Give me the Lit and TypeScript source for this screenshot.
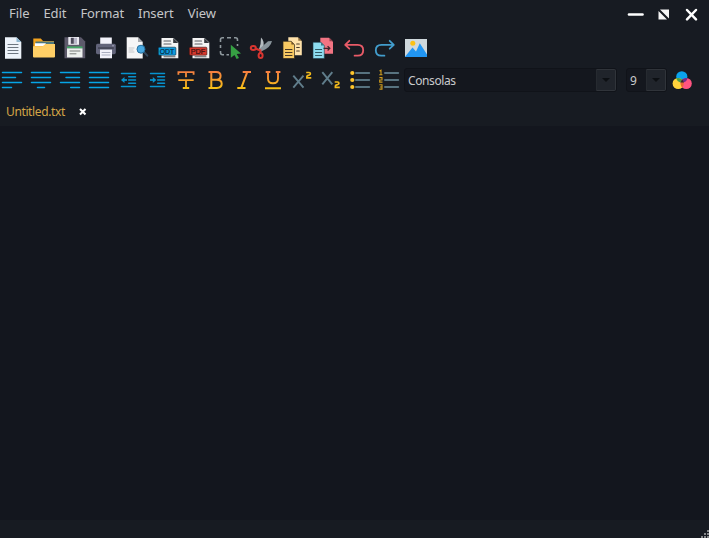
import { LitElement, html, svg, css } from "lit";
import { customElement } from "lit/decorators.js";

const lines = (rows: number[][], color: string, w = 1.5) =>
  rows.map(([x1, x2, y]) => svg`<path d="M${x1} ${y}H${x2}" stroke=${color} stroke-width=${w} stroke-linecap="round" fill="none"/>`);

const BLUE = "#06a5e6";

const badge = (label: string, color: string, dark: string) => svg`
  <path d="M5.5 2H17.5L22.3 6.5V22.3H5.5Z" fill="#f4f4f4"/>
  <path d="M17.2 2V7H22.3Z" fill="#33363c"/>
  ${lines([[8, 14.5, 5], [8, 15, 8], [8, 19, 20.8]], "#5a5d62", 1.1)}
  <rect x="2.3" y="11.2" width="17.6" height="8" rx="1" fill=${color} stroke=${dark} stroke-width=".6"/>
  <text x="11" y="17.9" text-anchor="middle" textLength="14.5" lengthAdjust="spacingAndGlyphs" font-family="Liberation Sans, sans-serif" font-size="7.6" fill=${dark} stroke=${dark} stroke-width=".2">${label}</text>`;

const fileIcons = [
  svg`<path d="M4 1.2H15.5L20.3 6V22.7H4Z" fill="#edf3fa"/><path d="M15.5 1.2V6H20.3Z" fill="#8db5cf"/>
    ${lines([[7, 17, 8.5], [7, 17, 11.5], [7, 17, 14.5], [7, 17, 17.5]], "#6d7680", 1.1)}`,
  svg`<path d="M1.3 2.5H8.8L11 5H22V12H1.3Z" fill="#f4a31e"/><path d="M3.5 5.5H22V8H3.5Z" fill="#4c777c"/>
    <path d="M3 7.2H14L12 10H3Z" fill="#fff"/><path d="M1 10.2H10.5L13.5 8H23V20.5Q23 21.6 22 21.6H2Q1 21.6 1 20.5Z" fill="#ffcf66"/>`,
  svg`<path d="M1.5 1.2H18L22.2 5.5V22.3H1.5Z" fill="#5d5a6b"/><path d="M5.3 1H16V8.8H5.3Z" fill="#ecebf2"/>
    <rect x="7.8" y="1.8" width="3" height="6" fill="#4b4959"/><rect x="11" y="1.8" width="3" height="6" fill="#b9b7c8"/>
    <rect x="4" y="10.4" width="15.5" height="2" fill="#43a866"/><rect x="4" y="12.4" width="15.5" height="9" fill="#edf0ee"/>
    ${lines([[7, 17, 15], [7, 13, 17.8]], "#777b78", 1)}`,
  svg`<rect x="6.2" y="1.5" width="11.6" height="8" fill="#f2f2fa"/><rect x="2" y="7.7" width="19.8" height="10.5" rx="1.6" fill="#62647a"/>
    <rect x="4" y="11.3" width="15.8" height="1.5" fill="#404253"/><circle cx="19" cy="9.8" r=".7" fill="#b8bbd0"/>
    <rect x="6" y="13.6" width="12" height="8.7" fill="#f2f2fa"/>${lines([[8, 16, 16.5], [8, 16, 19]], "#aaaec0", 1)}`,
  svg`<path d="M1.7 1.2H13L17.7 6V22.5H1.7Z" fill="#f6f6f6"/><path d="M13 1.2V6H17.7Z" fill="#a8aaae"/>
    ${lines([[4, 9, 12], [4, 8, 14], [4, 9, 16]], "#c6c8ca", 1)}
    <path d="M18.5 15.5L22.3 19.7" stroke="#33475b" stroke-width="2" stroke-linecap="round"/><circle cx="16" cy="13.2" r="4" fill="#48a7df" stroke="#256d9b" stroke-width="1"/>`,
  badge("ODT", "#109bdc", "#08283d"),
  badge("PDF", "#d5392e", "#33100f"),
  svg`<path d="M2.5 6V3.5Q2.5 1.8 4.5 1.8H6M9 1.8H13M16 1.8H17.5Q19.5 1.8 19.5 3.8V5M19.5 8V10M2.5 9V12M2.5 15V16.5Q2.5 18.7 4.5 18.7H6M8.5 18.7H11" stroke="#8e989d" stroke-width="1.6" fill="none"/>
    <path d="M12.8 8.7L23 17.4L18.7 18L21 22L18.6 23L16.5 19L12.8 21.8Z" fill="#36a043"/>`,
  svg`<path d="M12 1.5Q15.5 4 14.4 12.5L11.8 16L9.8 14Q12.2 8 12 1.5Z" fill="#b5bcc0"/><path d="M23 5L19 5.2L10.6 12.8L12.2 15.4Q21.5 12 23 5Z" fill="#89949b"/>
    <g fill="none" stroke="#d93530" stroke-width="2"><ellipse cx="4.3" cy="12" rx="2.5" ry="2"/><ellipse cx="11.6" cy="19.5" rx="2" ry="2.5"/><path d="M6.5 12.5L11.4 14.5V17"/></g>`,
  svg`<path d="M8.3 1.3H17.8L21.8 5.3V19.3H8.3Z" fill="#ffe2aa"/><path d="M18.3 1.3V4.8H21.8Z" fill="#8c6c3b"/>
    ${lines([[16.7, 19.3, 8], [16.7, 19.3, 11.5], [16.7, 19.3, 15]], "#4a3925", 1.1)}
    <path d="M3 5.3H11.2L14.5 8.6V22.5H3Z" fill="#f8c962" stroke="#2b241b" stroke-width=".7"/><path d="M11.4 5.3V8.4H14.5Z" fill="#715226"/>
    ${lines([[5.4, 12, 13.5], [5.4, 12, 16.5], [5.4, 12, 19.5]], "#4a3925", 1)}`,
  svg`<path d="M9.3 1.7H18L22 5.7V17.7H9.3Z" fill="#f27483"/><path d="M18.5 1.7V5.2H22Z" fill="#93404c"/>
    <path d="M2 6.3H10L13.3 9.6V22.5H2Z" fill="#8ddcf0" stroke="#1e3d49" stroke-width=".6"/><path d="M10 6.3V9.6H13.3Z" fill="#3c7482"/>
    ${lines([[4.5, 10.7, 13.5], [4.5, 10.7, 16.5], [4.5, 10.7, 19.5]], "#2f5964", 1)}
    <path d="M12.5 12.3H18.6M16.6 10.1L18.8 12.3L16.6 14.5" fill="none" stroke="#42262d" stroke-width="1.3"/>`,
  svg`<path d="M7.3 4.8L3.2 8.8L7.3 12.7M3.5 8.8H15.7Q21.2 8.8 21.2 14.2Q21.2 19.7 15.7 19.7H12.6" fill="none" stroke="#e95b68" stroke-width="1.8" stroke-linecap="round" stroke-linejoin="round"/>`,
  svg`<path d="M16.7 4.8L20.8 8.8L16.7 12.7M20.5 8.8H8.3Q2.8 8.8 2.8 14.2Q2.8 19.7 8.3 19.7H11.4" fill="none" stroke="#429dcc" stroke-width="1.8" stroke-linecap="round" stroke-linejoin="round"/>`,
  svg`<rect x="1" y="3" width="22" height="18" fill="#cfd8dc"/><circle cx="8.8" cy="7.2" r="2.5" fill="#fbc116"/>
    <path d="M1 20.7L8.5 11.5L12 15.5L15.8 7.3L23 18.5V21H1Z" fill="#2196f3"/>`,
];

const two = (x: number, y: number) =>
  svg`<path transform="translate(${x} ${y})" d="M.2 1H3.2Q4.4 1 4.4 2.2Q4.4 3.2 3.4 3.5L1.6 4.1Q.9 4.4 .9 5.2V6.4H5.3" fill="none" stroke="#f1b91c" stroke-width="1.7"/>`;

const formatIcons = [
  svg`${lines([[2.5, 21.5, 4.5], [2.5, 15.5, 9.5], [2.5, 21.5, 14.5], [2.5, 11.5, 19.5]], BLUE)}`,
  svg`${lines([[2.5, 21.5, 4.5], [2.5, 21.5, 9.5], [2.5, 21.5, 14.5], [8.5, 15.5, 19.5]], BLUE)}`,
  svg`${lines([[2.5, 21.5, 4.5], [8, 21.5, 9.5], [2.5, 21.5, 14.5], [12.7, 21.5, 19.5]], BLUE)}`,
  svg`${lines([[2.5, 21.5, 4.5], [2.5, 21.5, 9.5], [2.5, 21.5, 14.5], [2.5, 21.5, 19.5]], BLUE)}`,
  svg`${lines([[5.5, 19.5, 5.5], [12.7, 19.5, 8.7], [12.7, 19.5, 12.1], [12.7, 19.5, 15.3], [5.5, 19.5, 18.5]], "#0793cf", 1.5)}<path d="M11 12H6.5" stroke="#0793cf" stroke-width="1.7"/><path d="M8.5 9V15L5 12Z" fill="#0793cf"/>`,
  svg`${lines([[5.5, 19.5, 5.5], [12.7, 19.5, 8.7], [12.7, 19.5, 12.1], [12.7, 19.5, 15.3], [5.5, 19.5, 18.5]], "#0793cf", 1.5)}<path d="M5 12H9" stroke="#0793cf" stroke-width="1.7"/><path d="M7.8 9V15L11.3 12Z" fill="#0793cf"/>`,
  svg`<path d="M4.4 6.8V4.2H19.6V6.8M12 4.2V9.3M12 12V20M8.8 20H15.2M4.3 12.1H19.7" fill="none" stroke="url(#warm)" stroke-width="1.8"/>`,
  svg`<path d="M5.5 4.1H13.2Q17.6 4.1 17.6 7.8Q17.6 11.7 13.5 11.7H8.5M13.5 11.7Q18.7 11.7 18.7 15.8Q18.7 19.9 13.8 19.9H5.5M8.3 4.2V19.8" fill="none" stroke="url(#warm)" stroke-width="2"/>`,
  svg`<path d="M10.7 4.1H19M5.3 19.9H13.5M15.2 4.1L9.3 19.9" fill="none" stroke="url(#warm)" stroke-width="2"/>`,
  svg`<path d="M4.7 4H9.3M14.8 4H19.4M7 4V10.5Q7 15.3 12 15.3Q17 15.3 17 10.5V4M4 20.2H20" fill="none" stroke="url(#warm)" stroke-width="1.9"/>`,
  svg`<path d="M3.3 7.6L13.5 19.7M13.5 7.6L3.3 19.7" stroke="#607d8b" stroke-width="1.9"/>${two(16, 3.5)}`,
  svg`<path d="M3.3 4.2L13.3 16.3M13.3 4.2L3.3 16.3" stroke="#607d8b" stroke-width="1.9"/>${two(15.5, 13)}`,
  svg`${lines([[8, 21.2, 5], [8, 21.2, 12], [8, 21.2, 19]], "#587380", 2)}${[5, 12, 19].map((y) => svg`<circle cx="4.3" cy=${y} r="2.1" fill="#ffc52b"/>`)}`,
  svg`${lines([[8, 21.2, 5], [8, 21.2, 12], [8, 21.2, 19]], "#587380", 2)}
    <path d="M2.5 3L4 2.2V6.6M2.3 6.7H5.5M2.4 9.6H5V12H2.7V14.1H5.5M2.4 16.8H5V21.1H2.4M3 19H5" fill="none" stroke="#cf9c1d" stroke-width="1.1"/>`,
];

const box = (content: unknown, size = 24) =>
  html`<svg width=${size} height=${size} viewBox="0 0 ${size} ${size}">
    <defs><linearGradient id="warm" gradientUnits="userSpaceOnUse" x1="0" y1="3" x2="0" y2="21"><stop stop-color="#f57d42"/><stop offset="1" stop-color="#f8c315"/></linearGradient></defs>
    ${content}</svg>`;

@customElement("app-root")
export class AppRoot extends LitElement {
  static styles = css`
    :host { display: flex; flex-direction: column; width: 709px; height: 538px; overflow: hidden; background: #171b22; color: #c5c6c8; font: 12px "Noto Sans", sans-serif; }
    svg { display: block; flex: none; }
    .menubar { display: flex; height: 28px; flex: none; justify-content: space-between; }
    .menus { display: flex; gap: 14px; padding: 4px 0 0 9px; font-size: 13px; line-height: 18px; letter-spacing: -0.08px; }
    .windowbar { padding-right: 8px; }
    .files { display: flex; gap: 7px; padding: 8px 0 8px 1px; }
    .format { display: flex; height: 24px; flex: none; }
    .tools { display: flex; gap: 5px; }
    .combo { box-sizing: border-box; height: 24px; display: flex; background: #14171e; border: 1px solid #101319; border-radius: 3px; padding-left: 3px; }
    .value { flex: 1; font-size: 12px; letter-spacing: -0.4px; line-height: 23px; color: #c9cacc; white-space: nowrap; }
    .arrow { box-sizing: border-box; width: 20px; height: 22px; display: grid; place-items: center; background: #20242b; border: 1px solid #30343a; border-left-color: #262a30; border-radius: 0 2px 2px 0; }
    .font { width: 213px; margin-left: 3px; }
    .size { width: 41px; margin: 0 4px 0 9px; }
    .tabs { height: 34px; flex: none; display: flex; padding: 0 0 0 6px; box-sizing: border-box; }
    .tab { font-size: 12px; letter-spacing: -0.38px; line-height: 40px; color: #d4a546; white-space: nowrap; width: 72px; }
    .close { padding-top: 15px; }
    .editor { flex: 1; background: #13161e; }
    .status { height: 18px; display: flex; justify-content: flex-end; align-items: flex-end; }
  `;

  render() {
    const arrow = html`<span class="arrow"><svg width="10" height="6"><path d="M1 1H9L5 5Z" fill="#0c0f13"/></svg></span>`;
    return html`
      <div class="menubar">
        <nav class="menus">${["File", "Edit", "Format", "Insert", "View"].map((m) => html`<span>${m}</span>`)}</nav>
        <svg class="windowbar" width="76" height="28" viewBox="0 0 76 28">
          <path d="M4 14.5H17.5" stroke="#fff" stroke-width="2.6" stroke-linecap="round"/>
          <path d="M35 9.5H44V18.5Z M33.5 11V19.5H42Z" fill="#f6f6f6"/>
          <path d="M62 10L71 19.3M71 10L62 19.3" stroke="#fff" stroke-width="2.5" stroke-linecap="round"/>
        </svg>
      </div>
      <div class="files">${fileIcons.map((i) => box(i))}</div>
      <div class="format">
        <div class="tools">${formatIcons.map((i) => box(i))}</div>
        <div class="combo font"><span class="value">Consolas</span>${arrow}</div>
        <div class="combo size"><span class="value">9</span>${arrow}</div>
        ${box(svg`
          <circle cx="10.8" cy="8.8" r="5.6" fill="#0aa4ee"/><circle cx="7.2" cy="15.5" r="5.6" fill="#ffd23c"/><circle cx="15.2" cy="15.5" r="5.6" fill="#ff5481"/>
          <path d="M5.3 10.3Q8.8 9.2 11.2 11.7L10 14.4Q6.3 14 5.3 10.3Z" fill="#4c9f45"/><path d="M11.2 11.7Q13.5 9.2 16.5 10.3Q15.4 14 12.2 14.4Z" fill="#6d2c8c"/>
          <path d="M11.2 11.7Q14.3 15.7 11.2 19.5Q8.1 15.7 11.2 11.7Z" fill="#e66a30"/><path d="M11.2 11.3L13 14.4H9.4Z" fill="#35272d"/>`)}
      </div>
      <div class="tabs"><span class="tab">Untitled.txt</span>
        <svg class="close" width="10" height="10" viewBox="0 0 10 10"><path d="M2 2L7.5 7.5M7.5 2L2 7.5" stroke="#fff" stroke-width="2.1"/></svg>
      </div>
      <div class="editor"></div>
      <div class="status"><svg width="8" height="8"><path d="M6 0h2v2H6ZM3 3h2v2H3ZM6 3h2v2H6ZM0 6h2v2H0ZM3 6h2v2H3ZM6 6h2v2H6Z" fill="#85878a"/></svg></div>
    `;
  }
}
